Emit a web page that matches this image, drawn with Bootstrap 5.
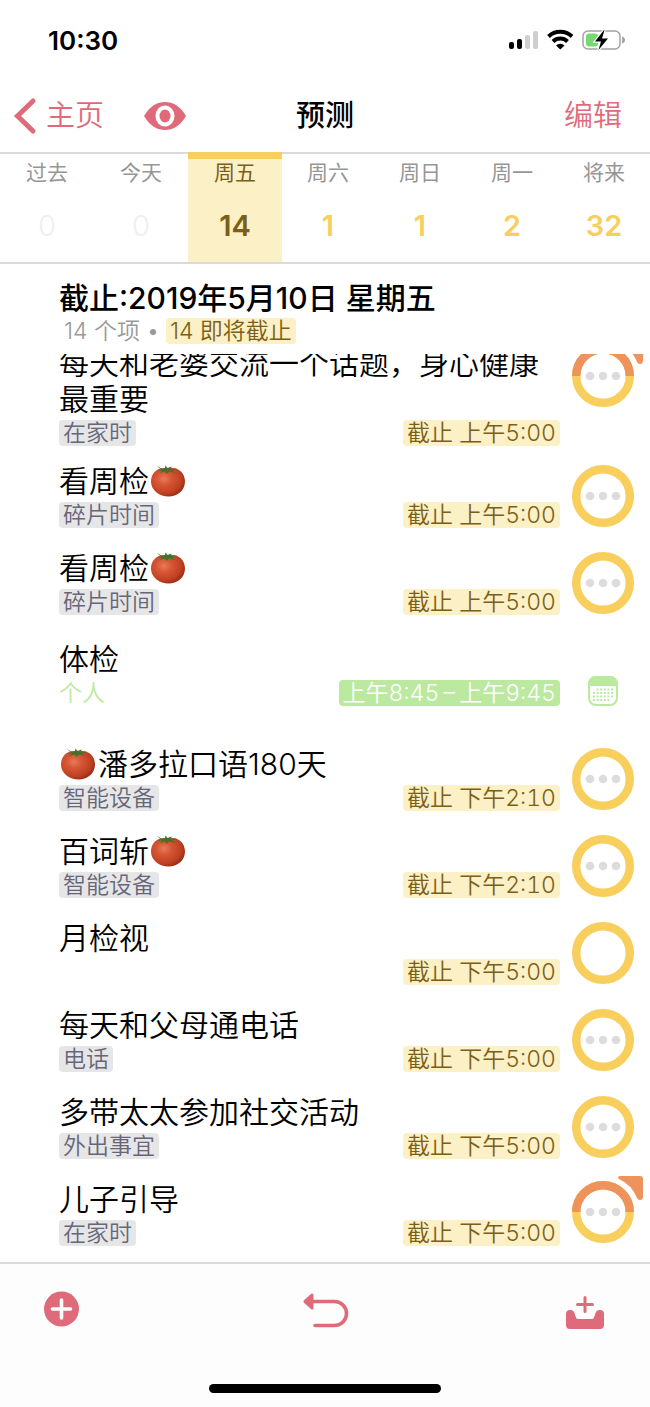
<!DOCTYPE html>
<html lang="zh-CN">
<head>
<meta charset="utf-8">
<meta name="viewport" content="width=device-width, initial-scale=1">
<title>预测</title>
<link href="https://cdn.jsdelivr.net/npm/bootstrap@5.3.0/dist/css/bootstrap.min.css" rel="stylesheet">
<style>
  :root {
    --rose: #df6b7a;
    --amber: #f8cf5c;
    --amber-pale: #fcf0c6;
    --amber-dark: #7b5f17;
    --leaf: #bbe9a0;
    --orange: #ef935c;
    --line: #dadada;
  }
  body { font-family: Inter, "Noto Sans CJK SC", sans-serif; color: #000; background: #fff; }
  button { border: 0; background: none; padding: 0; }
  svg { display: block; overflow: visible; }

  .status-bar { height: 80px; padding: 0 25px 0 48px; font-size: 26px; font-weight: 600; }
  .top-bar { height: 72px; padding: 0 14px; font-size: 29px; line-height: 36px; }
  .top-bar .side { flex: 1 1 0; }
  .top-bar a, .top-bar button { color: var(--rose); text-decoration: none; font-weight: 350; }
  .top-bar h1 { font-size: 29px; line-height: 36px; font-weight: 500; }
  .back-label { margin-left: 10px; }
  .eye-button { margin-left: 40px; }
  .edit-button { margin-right: 14px; }

  .day-tabs { display: grid; grid-template-columns: repeat(3, 94fr) repeat(4, 92fr); height: 112px;
    border-top: 2px solid var(--line); border-bottom: 2px solid var(--line); }
  .day-tab { display: flex; flex-direction: column; align-items: center; color: #969696; font-size: 21px; line-height: 26px; padding-top: 6px; }
  .day-tab strong { margin-top: 22px; font-size: 29px; line-height: 36px; font-weight: 600; color: var(--amber); }
  .day-tab.is-empty strong { color: #efefef; font-weight: 300; }
  .day-tab.is-active { background: var(--amber-pale); color: var(--amber-dark); border-top: 7px solid var(--amber); margin-top: -2px; padding-top: 1px; }
  .day-tab.is-active strong { color: var(--amber-dark); }

  .list-head { padding: 16px 16px 10px 59px; }
  .list-head h2 { font-size: 30px; line-height: 36px; font-weight: 500; }
  .list-head p { font-size: 23px; line-height: 26px; font-weight: 350; color: #999; padding-left: 5px; margin-top: 2px; }

  .chip { display: inline-block; font-size: 23px; line-height: 26px; height: 26px; padding: 0 4px; border-radius: 4px; font-weight: 350; white-space: nowrap; }
  .chip-due { background: var(--amber-pale); color: var(--amber-dark); }
  .chip-tag { background: #e6e6e7; color: #66667a; }
  .chip-event { background: var(--leaf); color: #fff; }
  .chip-plain { color: var(--leaf); padding: 0; }

  .task-list { padding: 0 16px 16px 59px; min-height: 0; }
  .task { margin-top: 22px; gap: 12px; }
  .task.after-long { margin-top: 17px; }
  .task.is-event { margin-top: 26px; }
  .task.after-event { margin-top: 40px; }
  .task h3 { font-size: 30px; line-height: 36px; font-weight: 350; margin-bottom: 3px; }
  .task .meta { min-height: 26px; font-variant-numeric: tabular-nums; }
  .task .check { width: 62px; }
  .flag-mark { margin-top: -5px; }
  .tomato { display: inline-block; width: 34px; height: 32px; margin: 0 2px 0 3px; vertical-align: -5px; }
  .task h3 .tomato:first-child { margin: 0 3px 0 2px; }

  .tool-bar { height: 145px; border-top: 2px solid var(--line); background: #fdfdfd; }
  .tool-row { padding: 27px 45px 0 44px; }
  .tool-row .side { flex: 1 1 0; }
  .home-bar { width: 232px; height: 9px; margin-bottom: 14px; border-radius: 5px; background: #000; }
</style>
</head>
<body>
<svg width="0" height="0" class="position-absolute" aria-hidden="true">
  <defs>
    <radialGradient id="skin" cx="38%" cy="38%" r="68%">
      <stop offset="0" stop-color="#e87a58"/><stop offset=".35" stop-color="#d65533"/>
      <stop offset=".75" stop-color="#bf4022"/><stop offset="1" stop-color="#932a12"/>
    </radialGradient>
    <symbol id="tomato" viewBox="0 0 34 32">
      <path d="M17 3.500C26 1 34 7 34 16.500c0 9.500-8 15-16.500 15S0 25.500 0 16.500C0 7 8 1 17 3.500z" fill="url(#skin)"/>
      <path d="M5.500 .5L11 4l3-1 .5-2.500L16.500 3l4-1.500L20 4l6-.5-5 2 3.500 2.500L18 6.500 15.500 9 14 6.500 8.500 8l3-2.500-5.500.5 4-1.500z" fill="#47702b"/>
    </symbol>
    <symbol id="dots" viewBox="0 0 62 62"><g fill="#dcdcdc"><circle cx="18" cy="31" r="4.300"/><circle cx="31" cy="31" r="4.300"/><circle cx="44" cy="31" r="4.300"/></g></symbol>
    <symbol id="ring" viewBox="0 0 62 62"><circle cx="31" cy="31" r="26.800" fill="none" stroke="#f8cf5c" stroke-width="8.400"/></symbol>
    <symbol id="flagged" viewBox="0 0 72 68">
      <circle cx="31" cy="36" r="26.800" fill="none" stroke="#f8cf5c" stroke-width="8.400"/>
      <path d="M4.200 36a26.800 26.800 0 0 1 53.600 0" fill="none" stroke="#ef935c" stroke-width="8.400"/>
      <path d="M48 0H68Q71 0 71 3V21Q70.500 24.500 67 23.800Q65.800 23.500 65 22Q60 9 47 3Q44.500 .5 48 0z" fill="#ef935c"/>
    </symbol>
  </defs>
</svg>

<div class="vh-100 d-flex flex-column overflow-hidden">
  <div class="status-bar d-flex align-items-center justify-content-between flex-shrink-0">
    <span>10:30</span>
    <svg width="117" height="22" viewBox="0 0 117 22" aria-label="信号、无线网络和电池">
      <rect x="1" y="13" width="5" height="7" rx="2"/><rect x="9" y="10" width="5" height="10" rx="2"/>
      <rect x="17" y="6" width="5" height="14" rx="2" fill="#cfcfcf"/><rect x="25" y="2" width="5" height="18" rx="2" fill="#cfcfcf"/>
      <g fill="none" stroke="#000" stroke-width="4"><path d="M40.500 7.500a17 17 0 0 1 23.500 0"/><path d="M45 12.500a10.500 10.500 0 0 1 14.500 0"/></g>
      <path d="M48 16.500a6 6 0 0 1 8.500 0L52.300 20.500z"/>
      <rect x="75" y="2" width="37" height="18" rx="5" fill="#fff" stroke="#a3a3a6" stroke-width="1.500"/>
      <rect x="78" y="4.500" width="12" height="13" rx="3" fill="#76d873"/>
      <path d="M114 7.500q3 1 3 3.500t-3 3.500z" fill="#a3a3a6"/>
      <path d="M96 1l-9 11.500h6L90.500 21 100 9.500h-6L96.500 1z" stroke="#fff" stroke-width="2.500" paint-order="stroke"/>
    </svg>
  </div>

  <header class="top-bar d-flex align-items-center flex-shrink-0">
    <div class="side d-flex align-items-center">
      <a href="#" class="d-flex align-items-center">
        <svg width="22" height="36" viewBox="0 0 22 36"><path d="M19 3L3.500 18 19 33" fill="none" stroke="#df6b7a" stroke-width="5" stroke-linecap="round"/></svg>
        <span class="back-label">主页</span>
      </a>
      <button type="button" class="eye-button" aria-label="查看">
        <svg width="42" height="28" viewBox="0 0 42 28"><path d="M0 14C6 4 13 0 21 0s15 4 21 14c-6 10-13 14-21 14S6 24 0 14z" fill="#df6b7a"/><ellipse cx="21" cy="14" rx="9.500" ry="10.500" fill="#fff"/><ellipse cx="21" cy="14" rx="5.500" ry="6.500" fill="#df6b7a"/></svg>
      </button>
    </div>
    <h1 class="mb-0">预测</h1>
    <div class="side text-end"><button type="button" class="edit-button">编辑</button></div>
  </header>

  <nav class="day-tabs flex-shrink-0" aria-label="日期">
    <button type="button" class="day-tab is-empty">过去<strong>0</strong></button>
    <button type="button" class="day-tab is-empty">今天<strong>0</strong></button>
    <button type="button" class="day-tab is-active">周五<strong>14</strong></button>
    <button type="button" class="day-tab">周六<strong>1</strong></button>
    <button type="button" class="day-tab">周日<strong>1</strong></button>
    <button type="button" class="day-tab">周一<strong>2</strong></button>
    <button type="button" class="day-tab">将来<strong>32</strong></button>
  </nav>

  <div class="list-head flex-shrink-0">
    <h2 class="mb-0">截止:2019年5月10日 星期五</h2>
    <p class="mb-0">14 个项 • <span class="chip chip-due">14 即将截止</span></p>
  </div>

  <main class="task-list flex-grow-1 d-flex flex-column justify-content-end overflow-hidden">
    <article class="task d-flex flex-shrink-0">
      <div class="flex-grow-1">
        <h3>每天和老婆交流一个话题，身心健康最重要</h3>
        <div class="meta d-flex justify-content-between"><span class="chip chip-tag">在家时</span><span class="chip chip-due">截止 上午5:00</span></div>
      </div>
      <button type="button" class="check align-self-start flex-shrink-0" aria-label="完成"><svg class="flag-mark" width="72" height="68"><use href="#flagged"/><use href="#dots" y="5" width="62" height="62"/></svg></button>
    </article>
    <article class="task after-long d-flex flex-shrink-0">
      <div class="flex-grow-1">
        <h3>看周检<svg class="tomato"><use href="#tomato"/></svg></h3>
        <div class="meta d-flex justify-content-between"><span class="chip chip-tag">碎片时间</span><span class="chip chip-due">截止 上午5:00</span></div>
      </div>
      <button type="button" class="check flex-shrink-0" aria-label="完成"><svg width="62" height="62"><use href="#ring"/><use href="#dots"/></svg></button>
    </article>
    <article class="task d-flex flex-shrink-0">
      <div class="flex-grow-1">
        <h3>看周检<svg class="tomato"><use href="#tomato"/></svg></h3>
        <div class="meta d-flex justify-content-between"><span class="chip chip-tag">碎片时间</span><span class="chip chip-due">截止 上午5:00</span></div>
      </div>
      <button type="button" class="check flex-shrink-0" aria-label="完成"><svg width="62" height="62"><use href="#ring"/><use href="#dots"/></svg></button>
    </article>
    <article class="task is-event d-flex flex-shrink-0">
      <div class="flex-grow-1">
        <h3>体检</h3>
        <div class="meta d-flex justify-content-between"><span class="chip chip-plain">个人</span><span class="chip chip-event">上午8:45&thinsp;–&thinsp;上午9:45</span></div>
      </div>
      <div class="check d-flex align-items-end justify-content-center flex-shrink-0">
        <svg width="30" height="30" viewBox="0 0 30 30">
          <rect x="1" y="1" width="28" height="28" rx="7" fill="#fff" stroke="#bbe9a0" stroke-width="2"/>
          <path d="M0 10V8a8 8 0 0 1 8-8h14a8 8 0 0 1 8 8v2z" fill="#bbe9a0"/>
          <g stroke="#bbe9a0" stroke-width="2" stroke-dasharray="2 1.600"><path d="M8.600 13.500H25"/><path d="M5 17H25"/><path d="M5 20.500H25"/><path d="M5 24H22"/></g>
        </svg>
      </div>
    </article>
    <article class="task after-event d-flex flex-shrink-0">
      <div class="flex-grow-1">
        <h3><svg class="tomato"><use href="#tomato"/></svg>潘多拉口语180天</h3>
        <div class="meta d-flex justify-content-between"><span class="chip chip-tag">智能设备</span><span class="chip chip-due">截止 下午2:10</span></div>
      </div>
      <button type="button" class="check flex-shrink-0" aria-label="完成"><svg width="62" height="62"><use href="#ring"/><use href="#dots"/></svg></button>
    </article>
    <article class="task d-flex flex-shrink-0">
      <div class="flex-grow-1">
        <h3>百词斩<svg class="tomato"><use href="#tomato"/></svg></h3>
        <div class="meta d-flex justify-content-between"><span class="chip chip-tag">智能设备</span><span class="chip chip-due">截止 下午2:10</span></div>
      </div>
      <button type="button" class="check flex-shrink-0" aria-label="完成"><svg width="62" height="62"><use href="#ring"/><use href="#dots"/></svg></button>
    </article>
    <article class="task d-flex flex-shrink-0">
      <div class="flex-grow-1">
        <h3>月检视</h3>
        <div class="meta d-flex justify-content-end"><span class="chip chip-due">截止 下午5:00</span></div>
      </div>
      <button type="button" class="check flex-shrink-0" aria-label="完成"><svg width="62" height="62"><use href="#ring"/></svg></button>
    </article>
    <article class="task d-flex flex-shrink-0">
      <div class="flex-grow-1">
        <h3>每天和父母通电话</h3>
        <div class="meta d-flex justify-content-between"><span class="chip chip-tag">电话</span><span class="chip chip-due">截止 下午5:00</span></div>
      </div>
      <button type="button" class="check flex-shrink-0" aria-label="完成"><svg width="62" height="62"><use href="#ring"/><use href="#dots"/></svg></button>
    </article>
    <article class="task d-flex flex-shrink-0">
      <div class="flex-grow-1">
        <h3>多带太太参加社交活动</h3>
        <div class="meta d-flex justify-content-between"><span class="chip chip-tag">外出事宜</span><span class="chip chip-due">截止 下午5:00</span></div>
      </div>
      <button type="button" class="check flex-shrink-0" aria-label="完成"><svg width="62" height="62"><use href="#ring"/><use href="#dots"/></svg></button>
    </article>
    <article class="task d-flex flex-shrink-0">
      <div class="flex-grow-1">
        <h3>儿子引导</h3>
        <div class="meta d-flex justify-content-between"><span class="chip chip-tag">在家时</span><span class="chip chip-due">截止 下午5:00</span></div>
      </div>
      <button type="button" class="check align-self-start flex-shrink-0" aria-label="完成"><svg class="flag-mark" width="72" height="68"><use href="#flagged"/><use href="#dots" y="5" width="62" height="62"/></svg></button>
    </article>
  </main>

  <footer class="tool-bar d-flex flex-column justify-content-between align-items-center flex-shrink-0">
    <div class="tool-row w-100 d-flex align-items-center">
      <div class="side"><button type="button" aria-label="新建"><svg width="36" height="36" viewBox="0 0 36 36"><circle cx="17.500" cy="18" r="17.500" fill="#df6b7a"/><path d="M17.500 9v18M8.500 18h18" stroke="#fff" stroke-width="3.600" stroke-linecap="round"/></svg></button></div>
      <button type="button" aria-label="撤销"><svg width="46" height="36" viewBox="-1 0 46 36"><path d="M8 7.500h23.500a12 12 0 0 1 0 24H12" fill="none" stroke="#df6b7a" stroke-width="3.600" stroke-linecap="round"/><path d="M1 6.300L8.300 -.3Q10.500 -1.300 10.500 1v13q0 2.300-2.200 1.300L1 8.700Q-.3 7.500 1 6.300z" fill="#df6b7a"/></svg></button>
      <div class="side d-flex justify-content-end"><button type="button" aria-label="收件箱"><svg width="40" height="36" viewBox="0 0 40 36"><path d="M20 3.500v14M12.500 10.500h15" stroke="#df6b7a" stroke-width="3" stroke-linecap="round"/><path d="M1 20q0-4 4-4h1q2.500 0 3.300 2.500l1.700 5q.6 1.500 2 1.500h14q1.400 0 2-1.500l1.700-5Q31.500 16 34 16h1q4 0 4 4v11q0 4-4 4H5q-4 0-4-4z" fill="#df6b7a"/></svg></button></div>
    </div>
    <div class="home-bar"></div>
  </footer>
</div>
<script src="https://cdn.jsdelivr.net/npm/bootstrap@5.3.0/dist/js/bootstrap.bundle.min.js"></script>
</body>
</html>
